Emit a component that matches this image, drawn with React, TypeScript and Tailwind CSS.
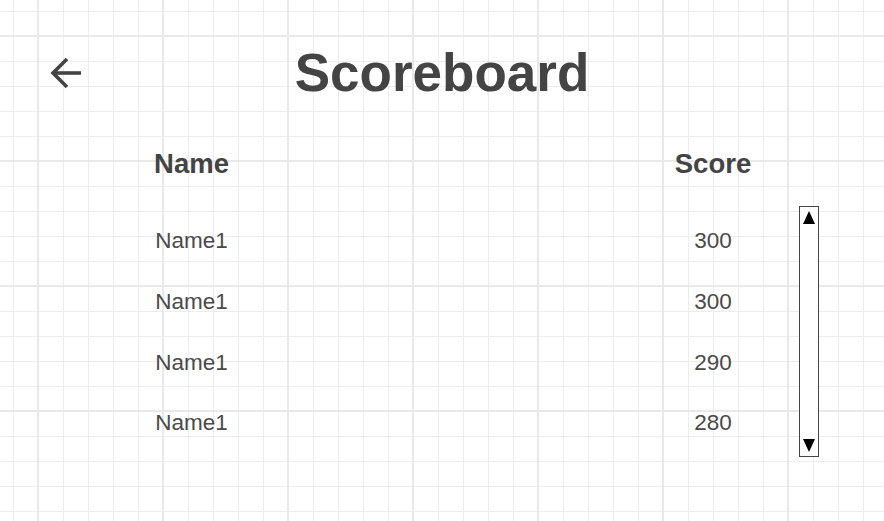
import type { ReactNode } from 'react'

type Entry = {
  name: string
  score: number
}

const entries: Entry[] = [
  { name: 'Name1', score: 300 },
  { name: 'Name1', score: 300 },
  { name: 'Name1', score: 290 },
  { name: 'Name1', score: 280 },
]

function BackArrow() {
  return (
    <svg width="48" height="48" viewBox="0 0 24 24" fill="none" stroke="#444444" strokeWidth="1.8" strokeLinecap="butt" strokeLinejoin="miter">
      <path d="M19 12H5.8" />
      <path d="M12 19l-7-7 7-7" />
    </svg>
  )
}

function Row({ left, right, className }: { left: ReactNode; right: ReactNode; className: string }) {
  return (
    <div className={`grid grid-cols-[159px_392px_100px] ${className}`}>
      <div className="text-center">{left}</div>
      <div />
      <div className="text-center">{right}</div>
    </div>
  )
}

export default function App() {
  return (
    <main
      className="h-[521px] w-full overflow-hidden bg-white text-[#444444] bg-[linear-gradient(to_right,#e9e9e9_2px,transparent_2px),linear-gradient(to_bottom,#e9e9e9_2px,transparent_2px),linear-gradient(to_right,#ededed_1px,transparent_1px),linear-gradient(to_bottom,#ededed_1px,transparent_1px)] bg-size-[125px_125px,125px_125px,25px_25px,25px_25px] bg-position-[37px_35px,37px_35px,13px_11px,13px_11px]"
      style={{ fontFamily: '"Liberation Sans", Arial, sans-serif' }}
    >
      {/* header */}
      <div className="grid grid-cols-[1fr_auto_1fr] items-center pt-[42px]">
        <button type="button" className="ml-[43px] flex h-[48px] w-[48px] items-center justify-center">
          <BackArrow />
        </button>
        <h1 className="text-[53px] font-bold leading-[62px]">Scoreboard</h1>
        <div />
      </div>

      {/* table */}
      <div className="pl-[112px]">
        <Row
          className="mt-[44px] text-[27.5px] font-bold leading-[32px]"
          left="Name"
          right="Score"
        />

        <div className="mt-[26px] flex items-start">
          <div className="h-[250px] overflow-hidden pt-[5px] text-[#4a4a4a]">
            {entries.map((entry, i) => (
              <Row
                key={i}
                className="h-[60.7px] items-center text-[22.5px] leading-[26px]"
                left={entry.name}
                right={entry.score}
              />
            ))}
          </div>

          {/* scrollbar */}
          <div className="ml-[36px] flex h-[251px] w-[20px] flex-col items-center justify-between border border-[#444444] bg-white py-[4px]">
            <svg width="12" height="13" viewBox="0 0 12 13">
              <polygon points="6,0 12,13 0,13" fill="#000" />
            </svg>
            <svg width="12" height="13" viewBox="0 0 12 13">
              <polygon points="0,0 12,0 6,13" fill="#000" />
            </svg>
          </div>
        </div>
      </div>
    </main>
  )
}
